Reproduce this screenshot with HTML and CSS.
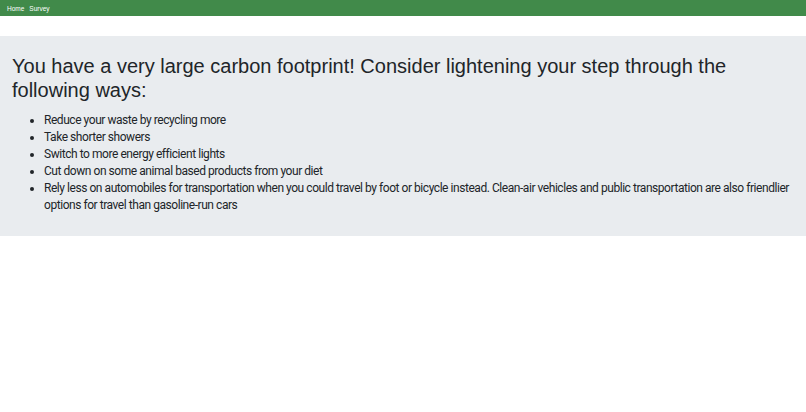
FILE: index.html
```html
<!DOCTYPE html>
<html lang="en">
  <head>
    <meta charset="UTF-8" />
    <meta name="viewport" content="width=device-width, initial-scale=1.0" />
    <title>Survey Results</title>
    <link rel="stylesheet" href="styles.css">
  </head>
  <body>
    <nav class="topbar">
      <a href="#">Home</a>
      <a href="#">Survey</a>
    </nav>
    <div class="jumbotron">
      <h1 class="title">You have a very large carbon footprint! Consider lightening your step through the following ways:</h1>
      <ul class="tips">
        <li>Reduce your waste by recycling more</li>
        <li>Take shorter showers</li>
        <li>Switch to more energy efficient lights</li>
        <li>Cut down on some animal based products from your diet</li>
        <li>Rely less on automobiles for transportation when you could travel by foot or bicycle instead. Clean-air vehicles and public transportation are also friendlier options for travel than gasoline-run cars</li>
      </ul>
    </div>
  </body>
</html>
```

FILE: styles.css
```css
body {
  margin: 0;
  font-family: "Liberation Sans", Arial, sans-serif;
  color: #212529;
  background: #fff;
}

.topbar {
  display: flex;
  gap: 5px;
  height: 16px;
  align-items: center;
  padding: 0 7px;
  background: #418a4a;
  box-sizing: border-box;
}

.topbar a {
  color: #fff;
  font-size: 6.5px;
  text-decoration: none;
}

.jumbotron {
  margin-top: 20px;
  padding: 18px 12px 22px;
  background: #e9ecef;
}

.title {
  margin: 0 0 10px;
  font-size: 20px;
  font-weight: 400;
  line-height: 24px;
}

.tips {
  margin: 0;
  padding-left: 32px;
  font-family: Roboto, "Liberation Sans", Arial, sans-serif;
  font-size: 12px;
  line-height: 17px;
  letter-spacing: -0.45px;
}
```
